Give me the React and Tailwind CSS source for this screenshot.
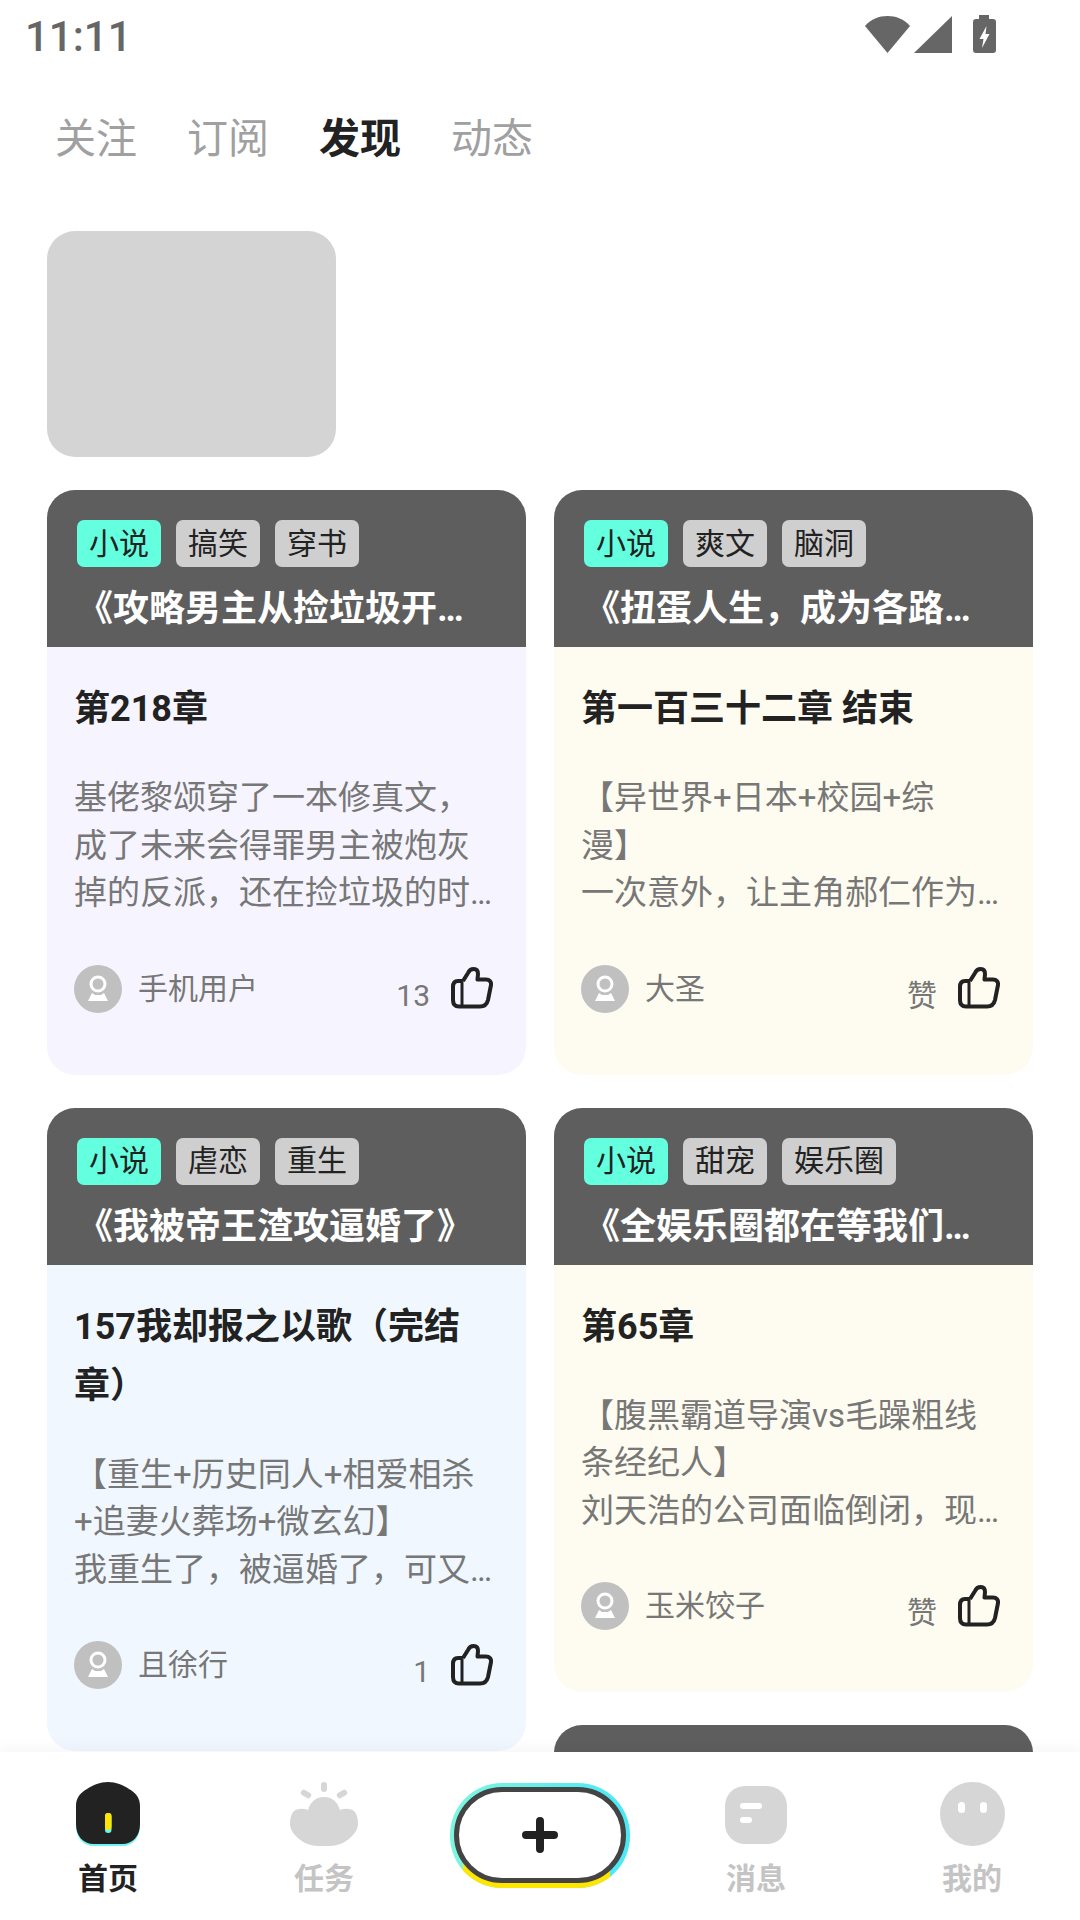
const cards = {
  left: [
    {
      tags: ["小说", "搞笑", "穿书"],
      book: "《攻略男主从捡垃圾开始逆袭》",
      chapter: "第218章",
      body: "基佬黎颂穿了一本修真文，成了未来会得罪男主被炮灰掉的反派，还在捡垃圾的时候遇到了男主角本人",
      user: "手机用户",
      likes: "13",
      bg: "bg-[#f6f5ff]",
    },
    {
      tags: ["小说", "虐恋", "重生"],
      book: "《我被帝王渣攻逼婚了》",
      chapter: "157我却报之以歌（完结章）",
      body: "【重生+历史同人+相爱相杀+追妻火葬场+微玄幻】\n我重生了，被逼婚了，可又能怎么办呢，只好认了",
      user: "且徐行",
      likes: "1",
      bg: "bg-[#f0f7fe]",
    },
  ],
  right: [
    {
      tags: ["小说", "爽文", "脑洞"],
      book: "《扭蛋人生，成为各路女神的偶像》",
      chapter: "第一百三十二章 结束",
      body: "【异世界+日本+校园+综\n漫】\n一次意外，让主角郝仁作为穿越者来到了异世界的日本",
      user: "大圣",
      likes: "赞",
      bg: "bg-[#fefcf0]",
    },
    {
      tags: ["小说", "甜宠", "娱乐圈"],
      book: "《全娱乐圈都在等我们离婚》",
      chapter: "第65章",
      body: "【腹黑霸道导演vs毛躁粗线条经纪人】\n刘天浩的公司面临倒闭，现在只能靠一部电影翻身了",
      user: "玉米饺子",
      likes: "赞",
      bg: "bg-[#fefcf0]",
    },
  ],
};

function StatusBar() {
  return (
    <div className="flex h-[72px] items-start justify-between pl-[25px] pr-[84px]">
      <span className="mt-[13px] text-[42px] leading-[48px] font-medium text-[#666]">11:11</span>
      <div className="mt-[15px] flex items-end">
        <svg width="45" height="38" viewBox="0 0 45 38">
          <path d="M22.5 38 L0 11 C6 4 14 1 22.5 1 C31 1 39 4 45 11 Z" fill="#666" />
        </svg>
        <svg width="38" height="37" viewBox="0 0 38 37" className="ml-[4px]">
          <path d="M38 0 V37 H0 Z" fill="#666" />
        </svg>
        <svg width="23" height="38" viewBox="0 0 23 38" className="ml-[21px]">
          <path d="M6 0 H16 V4 H20 C22 4 23 5 23 7 V35 C23 37 22 38 20 38 H3 C1 38 0 37 0 35 V7 C0 5 1 4 3 4 H6 Z" fill="#666" />
          <path d="M13.5 11 L6.5 24 H10.5 L9 33 L16.5 19 H12.5 Z" fill="#fff" />
        </svg>
      </div>
    </div>
  );
}

function Tabs() {
  const tabs = ["关注", "订阅", "发现", "动态"];
  return (
    <div className="flex h-[58px] gap-[50px] pl-[55px]">
      {tabs.map((t) => (
        <span
          key={t}
          className={
            t === "发现"
              ? "text-[41px] leading-[58px] font-bold text-[#222]"
              : "text-[41px] leading-[58px] text-[#a0a0a0]"
          }
        >
          {t}
        </span>
      ))}
    </div>
  );
}

function Thumb() {
  return (
    <svg width="42" height="43" viewBox="0 0 42 43" fill="none" stroke="#222" strokeWidth="4" strokeLinejoin="round" className="mb-[2px]">
      <path d="M12 15 L17 7 C19 2 27 1 27 8 L26.5 13.5 H35 C38.5 13.5 40.5 16 40 19 L37 34 C36 38 33 40.5 29 40.5 H8 C4 40.5 2 38 2 34 V21 C2 17 4 15 7 15 H12" />
      <path d="M11 15 V40" strokeWidth="3" />
    </svg>
  );
}

function Avatar() {
  return (
    <svg width="48" height="48" viewBox="0 0 48 48" className="shrink-0">
      <circle cx="24" cy="24" r="24" fill="#c0c0c0" />
      <circle cx="24" cy="19" r="7" fill="none" stroke="#fff" strokeWidth="3" />
      <path d="M18 28 L14 36 H34 L30 28 L27 30 H21 Z" fill="#fff" />
    </svg>
  );
}

function Card({ card }) {
  return (
    <div className={`overflow-hidden rounded-[28px] ${card.bg}`}>
      <div className="h-[157px] bg-[#5e5e5e] px-[30px] pt-[30px]">
        <div className="flex gap-[15px]">
          {card.tags.map((tag, i) => (
            <span
              key={tag}
              className={`flex h-[47px] items-center rounded-[7px] px-[12px] text-[30px] leading-none text-[#222] ${
                i === 0 ? "bg-[#64ffdf]" : "bg-[#cfcfcf]"
              }`}
            >
              {tag}
            </span>
          ))}
        </div>
        <div className="mt-[13px] truncate text-[36px] leading-[58px] font-bold text-white">{card.book}</div>
      </div>
      <div className="pt-[33px] pr-[28px] pb-[62px] pl-[27px]">
        <div className="text-[36px] leading-[59px] font-bold text-[#222]">{card.chapter}</div>
        <div className="mt-[35px] line-clamp-3 text-[33px] leading-[47.5px] whitespace-pre-line text-[#777]">{card.body}</div>
        <div className="mt-[48px] flex h-12 items-center pr-[5px]">
          <Avatar />
          <span className="ml-4 flex-1 text-[30px] leading-[48px] text-[#777]">{card.user}</span>
          <span className="mt-[14px] mr-[21px] text-[30px] leading-[48px] text-[#777]">{card.likes}</span>
          <Thumb />
        </div>
      </div>
    </div>
  );
}

function NavItem({ label, active, children }) {
  return (
    <div className="flex flex-col items-center">
      <div className="flex h-[64px] items-center justify-center">{children}</div>
      <span className={`mt-[12px] text-[30px] leading-[42px] font-bold ${active ? "text-[#222]" : "text-[#c4c4c4]"}`}>{label}</span>
    </div>
  );
}

function BottomNav() {
  return (
    <div className="relative z-10 grid h-[168px] grid-cols-5 bg-white pt-[30px] shadow-[0_-6px_12px_rgba(0,0,0,0.03)]">
      <NavItem label="首页" active>
        <svg width="64" height="64" viewBox="0 0 64 64">
          <path d="M32 2 C40 2 47 5 53 9 C60 13 64 18 64 26 V44 C64 56 57 64 46 64 H18 C7 64 0 56 0 44 V26 C0 18 4 13 11 9 C17 5 24 2 32 2 Z" fill="#6ff5f0" />
          <path d="M32 0 C40 0 47 3 53 7 C60 11 64 16 64 24 V42 C64 54 57 62 46 62 H18 C7 62 0 54 0 42 V24 C0 16 4 11 11 7 C17 3 24 0 32 0 Z" fill="#222" />
          <rect x="29" y="31" width="6.5" height="20" rx="3.25" fill="#6ff5f0" />
          <rect x="29" y="31" width="6.5" height="17" rx="3.25" fill="#ffe600" />
        </svg>
      </NavItem>
      <NavItem label="任务">
        <svg width="68" height="64" viewBox="0 0 68 64" fill="#d6d6d6">
          <rect x="31" y="0" width="6" height="10" rx="3" />
          <rect x="10.5" y="9" width="11" height="6" rx="3" transform="rotate(30 16 12)" />
          <rect x="46.5" y="9" width="11" height="6" rx="3" transform="rotate(-30 52 12)" />
          <path d="M34 15 C43 15 48 21 50 28 C55 26 61 26 65 30 C67 33 68 37 68 42 C68 52 54 64 40 64 H28 C14 64 0 52 0 42 C0 37 1 33 3 30 C7 26 13 26 18 28 C20 21 25 15 34 15 Z" />
        </svg>
      </NavItem>
      <div className="flex justify-center pt-[1px]">
        <div className="relative h-[105px] w-[180px] overflow-hidden rounded-[52px] bg-[linear-gradient(to_right,#7ff5df,#4ae8f6)]">
          <div className="absolute bottom-0 left-[13px] h-[34px] w-[147px] bg-[#ffe600]" />
          <div className="absolute top-[4px] left-[4px] flex h-[96px] w-[172px] items-center justify-center rounded-[48px] border-[5px] border-[#444] bg-white">
            <svg width="38" height="38" viewBox="0 0 38 38" stroke="#222" strokeWidth="8" strokeLinecap="round">
              <path d="M5 19 H33 M19 5 V33" />
            </svg>
          </div>
        </div>
      </div>
      <NavItem label="消息">
        <div className="mt-[2px] flex h-[58px] w-[62px] flex-col gap-[8px] rounded-[20px] bg-[#d6d6d6] pt-[17px] pl-[15px]">
          <div className="h-[6px] w-[22px] rounded-full bg-white" />
          <div className="h-[6px] w-[12px] rounded-full bg-white" />
        </div>
      </NavItem>
      <NavItem label="我的">
        <div className="flex h-[64px] w-[65px] justify-center gap-[15px] rounded-full bg-[#d6d6d6] pt-[20px]">
          <div className="h-[11px] w-[7px] rounded-full bg-white" />
          <div className="h-[11px] w-[7px] rounded-full bg-white" />
        </div>
      </NavItem>
    </div>
  );
}

export default function App() {
  return (
    <div className="flex h-[1920px] w-[1080px] flex-col overflow-hidden bg-white font-['Roboto','Noto_Sans_CJK_SC',sans-serif]">
      <StatusBar />
      <div className="min-h-0 flex-1 overflow-hidden">
        <div className="pt-[38px]">
          <Tabs />
        </div>
        <div className="px-[47px] pt-[63px]">
          <div className="h-[226px] w-[289px] rounded-[28px] bg-[#d4d4d4]" />
          <div className="mt-[33px] flex gap-[28px]">
            <div className="flex w-[479px] flex-col gap-[33px]">
              {cards.left.map((c) => (
                <Card key={c.book} card={c} />
              ))}
            </div>
            <div className="flex w-[479px] flex-col gap-[33px]">
              {cards.right.map((c) => (
                <Card key={c.book} card={c} />
              ))}
              <div className="h-[157px] rounded-t-[28px] bg-[#5e5e5e]" />
            </div>
          </div>
        </div>
      </div>
      <BottomNav />
    </div>
  );
}
